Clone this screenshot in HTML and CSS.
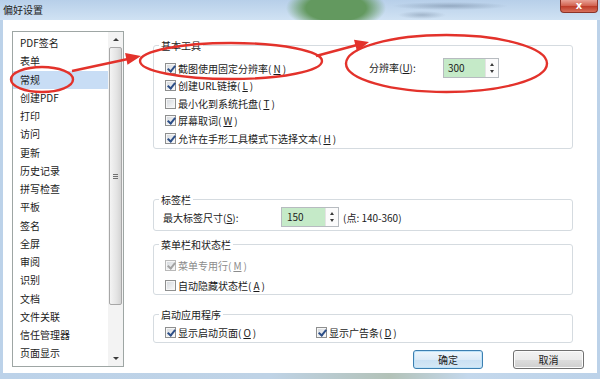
FILE: index.html
```html
<!DOCTYPE html>
<html lang="zh-CN">
<head>
  <meta charset="UTF-8" />
  <title>偏好设置</title>
  <link rel="stylesheet" href="styles.css">
</head>
<body>
  <div class="window">
    <div class="titlebar">
      <span class="title">偏好设置</span>
      <span class="close">x</span>
    </div>

    <div class="client">
      <div class="listbox">
        <ul class="cats">
          <li>PDF签名</li>
          <li>表单</li>
          <li class="sel">常规</li>
          <li>创建PDF</li>
          <li>打印</li>
          <li>访问</li>
          <li>更新</li>
          <li>历史记录</li>
          <li>拼写检查</li>
          <li>平板</li>
          <li>签名</li>
          <li>全屏</li>
          <li>审阅</li>
          <li>识别</li>
          <li>文档</li>
          <li>文件关联</li>
          <li>信任管理器</li>
          <li>页面显示</li>
        </ul>
        <div class="vscroll">
          <span class="sb-btn"><i class="arr-up"></i></span>
          <span class="sb-thumb"><i class="grip"></i></span>
          <span class="sb-track"></span>
          <span class="sb-btn"><i class="arr-dn"></i></span>
        </div>
      </div>

      <div class="panel">
        <fieldset class="group g-tools">
          <legend>基本工具</legend>
          <div class="tools-body">
            <div class="opts">
              <label class="opt"><span class="cb on"></span>截图使用固定分辨率(<u>N</u>)</label>
              <label class="opt"><span class="cb on"></span>创建URL链接(<u>L</u>)</label>
              <label class="opt"><span class="cb"></span>最小化到系统托盘(<u>T</u>)</label>
              <label class="opt"><span class="cb on"></span>屏幕取词(<u>W</u>)</label>
              <label class="opt"><span class="cb on"></span>允许在手形工具模式下选择文本(<u>H</u>)</label>
            </div>
            <div class="res">
              <span class="res-label">分辨率(<u>U</u>):</span>
              <span class="spin">
                <span class="spin-field">300</span>
                <span class="spin-btns"><i class="arr-up"></i><i class="arr-dn"></i></span>
              </span>
            </div>
          </div>
        </fieldset>

        <fieldset class="group g-tabs">
          <legend>标签栏</legend>
          <div class="tabs-body">
            <span class="tab-label">最大标签尺寸(<u>S</u>):</span>
            <span class="spin wide">
              <span class="spin-field">150</span>
              <span class="spin-btns"><i class="arr-up"></i><i class="arr-dn"></i></span>
            </span>
            <span class="hint">(点: 140-360)</span>
          </div>
        </fieldset>

        <fieldset class="group g-menu">
          <legend>菜单栏和状态栏</legend>
          <div class="menu-body">
            <label class="opt off"><span class="cb on"></span>菜单专用行(<u>M</u>)</label>
            <label class="opt"><span class="cb"></span>自动隐藏状态栏(<u>A</u>)</label>
          </div>
        </fieldset>

        <fieldset class="group g-start">
          <legend>启动应用程序</legend>
          <div class="start-body">
            <label class="opt first"><span class="cb on"></span>显示启动页面(<u>O</u>)</label>
            <label class="opt"><span class="cb on"></span>显示广告条(<u>D</u>)</label>
          </div>
        </fieldset>

        <div class="buttons">
          <button class="btn default">确定</button>
          <button class="btn cancel">取消</button>
        </div>
      </div>
    </div>

    <!-- red hand-drawn marks over the dialog -->
    <svg class="marks" width="600" height="379" viewBox="0 0 600 379">
      <g fill="none" stroke="#e3322b" stroke-width="2.4">
        <ellipse cx="42" cy="79.5" rx="31" ry="12.5"/>
        <ellipse cx="231" cy="61" rx="91" ry="18"/>
        <ellipse cx="446.5" cy="63.5" rx="100.5" ry="28.5"/>
        <line x1="72" y1="71" x2="128" y2="59"/>
        <line x1="316" y1="56" x2="357" y2="45"/>
      </g>
      <g fill="#e3322b">
        <polygon points="141,56 127.5,64.7 125.1,52.9"/>
        <polygon points="369,42 357,51.4 354,39.8"/>
      </g>
    </svg>
  </div>
</body>
</html>
```

FILE: styles.css
```css
* {
  box-sizing: border-box;
}

body {
  margin: 0;
  font-family: "Noto Sans CJK SC", "Noto Sans", sans-serif;
  font-size: 10px;
  color: #1b1b1b;
  background: #c6daee;
}

.window {
  position: relative;
  width: 600px;
  height: 379px;
  display: flex;
  flex-direction: column;
  background: linear-gradient(to right, #bcd2e9, #bfd3e6 45%, #b3c2b8 65%, #c4d8ec 78%, #bcd2e9);
}

.titlebar {
  height: 20px;
  flex: none;
  display: flex;
  align-items: flex-start;
  padding-left: 3px;
  background:
    radial-gradient(ellipse 50px 22px at 336px 8px, #63995f 60%, rgba(99,153,95,0) 100%),
    radial-gradient(ellipse 58px 4px at 450px 6px, rgba(70,90,115,0.35), rgba(70,90,115,0)),
    radial-gradient(ellipse 24px 4px at 422px 15px, rgba(70,90,115,0.3), rgba(70,90,115,0)),
    linear-gradient(#b7cfe9, #d0e2f3);
}

.title {
  line-height: 19px;
  color: #222;
}

.close {
  margin-left: auto;
  margin-right: 2px;
  width: 38px;
  height: 13px;
  border: 1px solid #8b3328;
  border-top: none;
  border-radius: 0 0 4px 4px;
  background: linear-gradient(#e9a296, #d1604d 50%, #bd3a27 51%, #d8705c);
  color: #fff;
  font-family: "DejaVu Sans", sans-serif;
  font-weight: bold;
  font-size: 10px;
  line-height: 11px;
  text-align: center;
}

.client {
  height: 353px;
  flex: none;
  margin: 0 3px;
  background: #fff;
  display: flex;
  gap: 29px;
  padding: 11px 0 0 9px;
}

/* category list */
.listbox {
  width: 112px;
  height: 336px;
  flex: none;
  display: flex;
  border: 1px solid #9ea6a4;
}

.cats {
  list-style: none;
  margin: 0;
  padding: 2px 0 0;
  width: 95px;
}

.cats li {
  height: 18.25px;
  line-height: 18.25px;
  padding-left: 7px;
  white-space: nowrap;
}

.cats li.sel {
  background: #c8ddf5;
}

.vscroll {
  flex: 1;
  display: flex;
  flex-direction: column;
  background: #f3f3f3;
}

.sb-btn {
  height: 15px;
  display: flex;
  align-items: center;
  justify-content: center;
}

.sb-thumb {
  height: 258px;
  margin: 0 1px;
  border: 1px solid #a7a7a7;
  border-radius: 2px;
  background: linear-gradient(to right, #f4f4f4, #e4e4e4 60%, #d4d4d4);
  display: flex;
  align-items: center;
  justify-content: center;
}

.grip {
  width: 5px;
  height: 5px;
  border-top: 1px solid #707070;
  border-bottom: 1px solid #707070;
  background: linear-gradient(#707070, #707070) center / 5px 1px no-repeat;
}

.sb-track {
  flex: 1;
}

.arr-up, .arr-dn {
  width: 0;
  height: 0;
  border-left: 3px solid transparent;
  border-right: 3px solid transparent;
}

.arr-up {
  border-bottom: 3px solid #3a3a3a;
}

.arr-dn {
  border-top: 3px solid #3a3a3a;
}

/* right side */
.panel {
  width: 431px;
  flex: none;
  display: flex;
  flex-direction: column;
  padding-top: 7px;
}

.group {
  margin: 0 11px 0 0;
  padding: 0;
  min-width: 0;
  border: 1px solid #d5dbe0;
  border-radius: 3px;
}

.group legend {
  margin-left: 5px;
  padding: 2px 2px 0;
  line-height: 12px;
}

.g-tabs { margin-top: 43px; }
.g-menu { margin-top: 6px; }
.g-start { margin-top: 12px; }

.tools-body {
  display: flex;
  align-items: flex-start;
  padding: 7.25px 0 1.5px 11px;
}

.opts {
  width: 204px;
  display: flex;
  flex-direction: column;
}

.opt {
  display: flex;
  align-items: center;
  gap: 2px;
  height: 17.5px;
  white-space: nowrap;
}

.opt u {
  text-decoration: underline;
}

.opt.off {
  color: #8c8c8c;
}

.cb {
  width: 11px;
  height: 11px;
  flex: none;
  border: 1px solid #8e8f8f;
  background: linear-gradient(135deg, #d3d7dc, #fbfbfb);
  box-shadow: inset 0 0 0 1px #f6f6f6;
}

.cb.on::after {
  content: "";
  display: block;
  width: 3px;
  height: 6px;
  margin: 0 0 0 3px;
  border: solid #2d4f88;
  border-width: 0 2px 2px 0;
  transform: rotate(40deg);
}

.off .cb {
  border-color: #b9b9b9;
}

.off .cb.on::after {
  border-color: #a3a3a3;
}

.res {
  display: flex;
  align-items: center;
  margin-top: -1.5px;
}

.res-label {
  width: 74px;
}

.spin {
  display: flex;
  height: 20px;
  border: 1px solid #b7bbc0;
}

.spin-field {
  width: 41px;
  padding-left: 4px;
  line-height: 18px;
  background: #c5eac8;
}

.spin.wide .spin-field {
  width: 43px;
  padding-left: 5px;
}

.spin-btns {
  width: 13px;
  display: flex;
  flex-direction: column;
  justify-content: space-between;
  align-items: center;
  padding: 4px 0;
  background: #fbfbfb;
  border-left: 1px solid #e4e4e4;
}

.spin-btns .arr-up, .spin-btns .arr-dn {
  border-left-width: 2.5px;
  border-right-width: 2.5px;
}

.tabs-body {
  display: flex;
  align-items: center;
  padding: 1px 0 3px 9px;
}

.tab-label {
  width: 118px;
}

.hint {
  margin-left: 4px;
}

.menu-body {
  display: flex;
  flex-direction: column;
  gap: 4.5px;
  padding: 6px 0 0.5px 11px;
}

.menu-body .opt,
.start-body .opt {
  height: 16px;
}

.start-body {
  display: flex;
  padding: 3px 0 2px 11px;
}

.start-body .opt.first {
  width: 151px;
}

.buttons {
  display: flex;
  justify-content: flex-end;
  gap: 30px;
  margin-top: 7px;
}

.btn {
  height: 19px;
  padding: 0;
  font-family: inherit;
  font-size: 10px;
  color: #1b1b1b;
  border-radius: 3px;
}

.btn.default {
  width: 70px;
  border: 1px solid #3c7fb1;
  background: linear-gradient(#eef6fc, #dcebf8 50%, #c9e0f3 51%, #d6e8f6);
  box-shadow: inset 0 0 0 1px #bfe3f9;
}

.btn.cancel {
  width: 71px;
  border: 1px solid #707070;
  background: linear-gradient(#f3f3f3, #ebebeb 50%, #dddddd 51%, #cfcfcf);
  box-shadow: inset 0 0 0 1px #fcfcfc;
}

.marks {
  position: absolute;
  top: 0;
  left: 0;
  pointer-events: none;
}
```
